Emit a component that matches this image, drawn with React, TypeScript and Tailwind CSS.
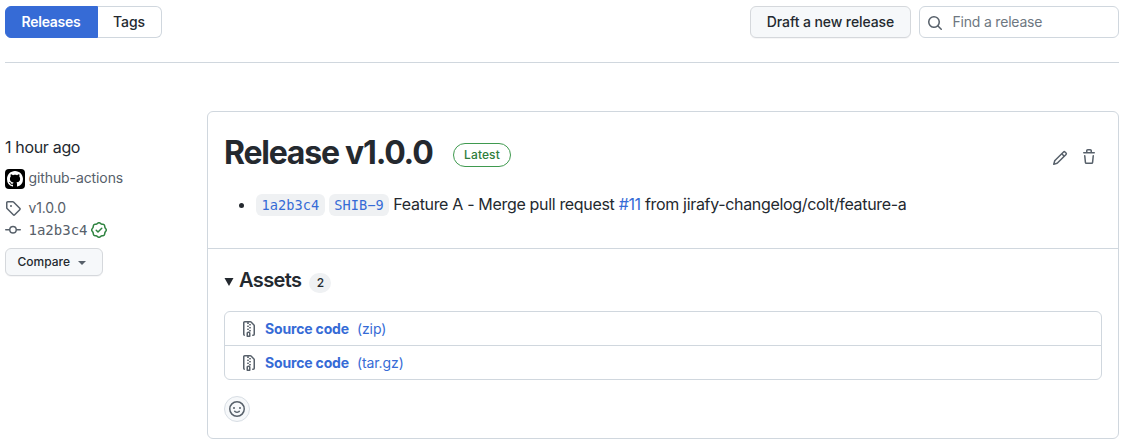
const paths = {
  search:
    'M10.68 11.74a6 6 0 0 1-7.922-8.982 6 6 0 0 1 8.982 7.922l3.04 3.04a.749.749 0 0 1-.326 1.275.749.749 0 0 1-.734-.215ZM11.5 7a4.499 4.499 0 1 0-8.997 0A4.499 4.499 0 0 0 11.5 7Z',
  tag: 'M1 7.775V2.75C1 1.784 1.784 1 2.75 1h5.025c.464 0 .91.184 1.238.513l6.25 6.25a1.75 1.75 0 0 1 0 2.474l-5.026 5.026a1.75 1.75 0 0 1-2.474 0l-6.25-6.25A1.752 1.752 0 0 1 1 7.775Zm1.5 0c0 .066.026.13.073.177l6.25 6.25a.25.25 0 0 0 .354 0l5.025-5.025a.25.25 0 0 0 0-.354l-6.25-6.25a.25.25 0 0 0-.177-.073H2.75a.25.25 0 0 0-.25.25ZM6 5a1 1 0 1 1 0 2 1 1 0 0 1 0-2Z',
  commit:
    'M11.93 8.5a4.002 4.002 0 0 1-7.86 0H.75a.75.75 0 0 1 0-1.5h3.32a4.002 4.002 0 0 1 7.86 0h3.32a.75.75 0 0 1 0 1.5Zm-1.43-.75a2.5 2.5 0 1 0-5 0 2.5 2.5 0 0 0 5 0Z',
  verified:
    'm9.585.52.929.68c.153.112.331.186.518.215l1.138.175a2.678 2.678 0 0 1 2.24 2.24l.174 1.139c.029.187.103.365.215.518l.68.928a2.677 2.677 0 0 1 0 3.17l-.68.928a1.174 1.174 0 0 0-.215.518l-.175 1.138a2.678 2.678 0 0 1-2.241 2.241l-1.138.175a1.17 1.17 0 0 0-.518.215l-.928.68a2.677 2.677 0 0 1-3.17 0l-.928-.68a1.174 1.174 0 0 0-.518-.215L3.83 14.41a2.678 2.678 0 0 1-2.24-2.24l-.175-1.138a1.17 1.17 0 0 0-.215-.518l-.68-.928a2.677 2.677 0 0 1 0-3.17l.68-.928c.112-.153.186-.331.215-.518l.175-1.14a2.678 2.678 0 0 1 2.24-2.24l1.139-.175c.187-.029.365-.103.518-.215l.928-.68a2.677 2.677 0 0 1 3.17 0ZM7.303 1.728l-.927.68a2.67 2.67 0 0 1-1.18.489l-1.137.174a1.179 1.179 0 0 0-.987.987l-.174 1.136a2.677 2.677 0 0 1-.489 1.18l-.68.928a1.18 1.18 0 0 0 0 1.394l.68.927c.256.348.424.753.489 1.18l.174 1.137c.078.509.478.909.987.987l1.136.174a2.67 2.67 0 0 1 1.18.489l.928.68c.414.305.979.305 1.394 0l.927-.68a2.67 2.67 0 0 1 1.18-.489l1.137-.174a1.18 1.18 0 0 0 .987-.987l.174-1.136a2.67 2.67 0 0 1 .489-1.18l.68-.928a1.176 1.176 0 0 0 0-1.394l-.68-.927a2.686 2.686 0 0 1-.489-1.18l-.174-1.137a1.179 1.179 0 0 0-.987-.987l-1.136-.174a2.677 2.677 0 0 1-1.18-.489l-.928-.68a1.176 1.176 0 0 0-1.394 0ZM11.28 6.78l-3.75 3.75a.75.75 0 0 1-1.06 0L4.72 8.78a.751.751 0 0 1 .018-1.042.751.751 0 0 1 1.042-.018L7 8.94l3.22-3.22a.751.751 0 0 1 1.042.018.751.751 0 0 1 .018 1.042Z',
  pencil:
    'M11.013 1.427a1.75 1.75 0 0 1 2.474 0l1.086 1.086a1.75 1.75 0 0 1 0 2.474l-8.61 8.61c-.21.21-.47.364-.756.445l-3.251.93a.75.75 0 0 1-.927-.928l.929-3.25c.081-.286.235-.547.445-.758l8.61-8.61Zm.176 4.823L9.75 4.81l-6.286 6.287a.253.253 0 0 0-.064.108l-.558 1.953 1.953-.558a.253.253 0 0 0 .108-.064Zm1.238-3.763a.25.25 0 0 0-.354 0L10.811 3.75l1.439 1.44 1.263-1.263a.25.25 0 0 0 0-.354Z',
  trash:
    'M11 1.75V3h2.25a.75.75 0 0 1 0 1.5H2.75a.75.75 0 0 1 0-1.5H5V1.75C5 .784 5.784 0 6.75 0h2.5C10.216 0 11 .784 11 1.75ZM4.496 6.675l.66 6.6a.25.25 0 0 0 .249.225h5.19a.25.25 0 0 0 .249-.225l.66-6.6a.75.75 0 0 1 1.492.149l-.66 6.6A1.748 1.748 0 0 1 10.595 15h-5.19a1.75 1.75 0 0 1-1.741-1.575l-.66-6.6a.75.75 0 1 1 1.492-.15ZM6.5 1.75V3h3V1.75a.25.25 0 0 0-.25-.25h-2.5a.25.25 0 0 0-.25.25Z',
  zip: 'M3.5 1.75v11.5c0 .09.048.173.126.217a.75.75 0 0 1-.752 1.298A1.748 1.748 0 0 1 2 13.25V1.75C2 .784 2.784 0 3.75 0h5.586c.464 0 .909.185 1.237.513l2.914 2.914c.329.328.513.773.513 1.237v8.586A1.75 1.75 0 0 1 12.25 15h-.5a.75.75 0 0 1 0-1.5h.5a.25.25 0 0 0 .25-.25V4.664a.25.25 0 0 0-.073-.177L9.513 1.573a.25.25 0 0 0-.177-.073H7.25a.75.75 0 0 1 0 1.5h-.5a.75.75 0 0 1 0-1.5h-3a.25.25 0 0 0-.25.25Zm3.75 8.75h.5c.966 0 1.75.784 1.75 1.75v3a.75.75 0 0 1-.75.75h-2.5a.75.75 0 0 1-.75-.75v-3c0-.966.784-1.75 1.75-1.75ZM6 5.25a.75.75 0 0 1 .75-.75h.5a.75.75 0 0 1 0 1.5h-.5A.75.75 0 0 1 6 5.25Zm.75 2.25h.5a.75.75 0 0 1 0 1.5h-.5a.75.75 0 0 1 0-1.5ZM8 6.75A.75.75 0 0 1 8.75 6h.5a.75.75 0 0 1 0 1.5h-.5A.75.75 0 0 1 8 6.75ZM8.75 3h.5a.75.75 0 0 1 0 1.5h-.5a.75.75 0 0 1 0-1.5ZM8 9.75A.75.75 0 0 1 8.75 9h.5a.75.75 0 0 1 0 1.5h-.5A.75.75 0 0 1 8 9.75Zm-1 2.5v2.25h1v-2.25a.25.25 0 0 0-.25-.25h-.5a.25.25 0 0 0-.25.25Z',
  smiley:
    'M8 0a8 8 0 1 1 0 16A8 8 0 0 1 8 0ZM1.5 8a6.5 6.5 0 1 0 13 0 6.5 6.5 0 0 0-13 0Zm3.82 1.636a.75.75 0 0 1 1.038.175l.007.009c.103.118.22.222.35.31.264.178.683.37 1.285.37.602 0 1.02-.192 1.285-.371.13-.088.247-.192.35-.31l.007-.008a.75.75 0 0 1 1.222.87l-.022-.015c.02.013.021.015.021.015v.001l-.001.002-.002.003-.005.007-.014.019a2.066 2.066 0 0 1-.184.213c-.16.166-.338.316-.53.445-.63.418-1.37.638-2.127.629-.946 0-1.652-.308-2.126-.63a3.331 3.331 0 0 1-.715-.657l-.014-.02-.005-.006-.002-.003v-.002h-.001l.613-.432-.614.43a.75.75 0 0 1 .183-1.044ZM12 7a1 1 0 1 1-2 0 1 1 0 0 1 2 0ZM5 8a1 1 0 1 1 0-2 1 1 0 0 1 0 2Zm5.25 2.25.592.416a97.71 97.71 0 0 0-.592-.416Z',
  github:
    'M8 0c4.42 0 8 3.58 8 8a8.013 8.013 0 0 1-5.45 7.59c-.4.08-.55-.17-.55-.38 0-.27.01-1.13.01-2.2 0-.75-.25-1.23-.54-1.48 1.78-.2 3.65-.88 3.65-3.95 0-.88-.31-1.59-.82-2.15.08-.2.36-1.02-.08-2.12 0 0-.67-.22-2.2.82-.64-.18-1.32-.27-2-.27-.68 0-1.36.09-2 .27-1.53-1.03-2.2-.82-2.2-.82-.44 1.1-.16 1.92-.08 2.12-.51.56-.82 1.28-.82 2.15 0 3.06 1.86 3.75 3.64 3.95-.23.2-.44.55-.51 1.07-.46.21-1.61.55-2.33-.66-.15-.24-.6-.83-1.23-.82-.67.01-.27.38.01.53.34.19.73.9.82 1.13.16.45.68 1.31 2.69.94 0 .67.01 1.3.01 1.49 0 .21-.15.45-.55.38A7.995 7.995 0 0 1 0 8c0-4.42 3.58-8 8-8Z',
};

function Icon({ name, className = 'size-4' }: { name: keyof typeof paths; className?: string }) {
  return (
    <svg viewBox="0 0 16 16" className={`shrink-0 fill-current ${className}`} aria-hidden="true">
      <path d={paths[name]} />
    </svg>
  );
}

function Toolbar() {
  return (
    <header className="flex h-[63px] items-start justify-between border-b border-[#d0d7de] pt-1.5">
      <nav className="flex h-8 text-sm font-medium leading-[30px]">
        <a className="w-[93px] rounded-l-md border border-[#366bd6] bg-[#366bd6] pr-px text-center font-semibold tracking-[-0.25px] text-white">
          Releases
        </a>
        <a className="w-16 rounded-r-md border border-l-0 border-[#d0d7de] pr-px text-center tracking-[-0.1px]">
          Tags
        </a>
      </nav>
      <div className="flex gap-2">
        <button className="h-8 w-[161px] rounded-md border border-[#d5d8dc] bg-[#f6f8fa] text-sm font-medium tracking-[-0.09px] shadow-[0_1px_0_rgba(31,35,40,0.04)]">
          Draft a new release
        </button>
        <label className="flex h-8 w-[200px] items-center rounded-md border border-[#d0d7de] pl-[7px] text-sm text-[#6e7781]">
          <Icon name="search" className="mt-0.5 size-4 text-[#57606a]" />
          <span className="ml-[9.5px] tracking-[-0.2px]">Find a release</span>
        </label>
      </div>
    </header>
  );
}

function Sidebar() {
  return (
    <aside className="w-[202px] shrink-0 pt-6 text-sm text-[#57606a]">
      <div className="text-base leading-6 tracking-[-0.33px] text-[#24292f]">1 hour ago</div>
      <div className="mt-[9px] flex h-5 items-center">
        <span className="mt-px flex size-5 items-center justify-center rounded bg-black text-white">
          <Icon name="github" />
        </span>
        <span className="ml-[3.5px] tracking-[-0.1px]">github-actions</span>
      </div>
      <div className="mt-2.5 flex h-5 items-center">
        <Icon name="tag" />
        <span className="ml-[7.5px] tracking-[-0.15px]">v1.0.0</span>
      </div>
      <div className="mt-[2px] flex h-5 items-center">
        <Icon name="commit" />
        <span className="ml-[7.5px] font-['DejaVu_Sans_Mono',monospace] text-sm">1a2b3c4</span>
        <Icon name="verified" className="ml-[3.5px] size-4 text-[#2f8340]" />
      </div>
      <button className="mt-2 flex h-7 w-[98px] items-center rounded-md border border-[#d5d8dc] bg-[#f6f8fa] pl-[11.5px] text-xs font-medium text-[#24292f] shadow-[0_1px_0_rgba(31,35,40,0.04)]">
        Compare
        <span className="ml-2 mt-0.5 border-x-4 border-t-4 border-x-transparent border-t-[#57606a]" />
      </button>
    </aside>
  );
}

function Code({ children }: { children: string }) {
  return (
    <code className="rounded-md bg-[#eff1f3] px-[5.5px] py-[3px] font-['DejaVu_Sans_Mono',monospace] text-[13.6px] leading-4 tracking-[0.06px] text-[#366bd6]">
      {children}
    </code>
  );
}

function Asset({ format }: { format: string }) {
  return (
    <li className="flex h-[34px] items-center pl-4 text-sm text-[#366bd6] last:h-[33px]">
      <Icon name="zip" className="size-4 text-[#57606a]" />
      <a className="ml-2 font-bold tracking-[-0.16px]">Source code</a>
      <a className="ml-2 tracking-[-0.1px]">({format})</a>
    </li>
  );
}

function ReleaseCard() {
  return (
    <section className="h-[328px] w-[912px] rounded-md border border-[#d0d7de]">
      <div className="h-[137px] border-b border-[#d0d7de] px-4 pt-[17px]">
        <div className="flex h-12 items-center">
          <h1 className="w-[208px] whitespace-nowrap text-[32px] font-bold leading-12 tracking-[-1.22px]">
            Release v1.0.0
          </h1>
          <span className="ml-[21px] mt-1 flex h-6 w-[58px] shrink-0 items-center justify-center rounded-full border border-[#3f9a4f] text-xs font-medium tracking-[0.1px] text-[#2f7d3b]">
            Latest
          </span>
          <div className="ml-auto mt-2 flex gap-[13px] pr-[5px] text-[#57606a]">
            <Icon name="pencil" className="mt-px size-4" />
            <Icon name="trash" />
          </div>
        </div>
        <ul className="mt-[15px] list-disc pl-8 text-base leading-6">
          <li className="tracking-[-0.33px]">
            <span className="inline-flex items-center gap-1 tracking-normal">
              <Code>1a2b3c4</Code>
              <Code>SHIB−9</Code>
            </span>{' '}
            Feature A - Merge pull request <a className="text-[#366bd6]">#11</a> from jirafy-changelog/colt/feature-a
          </li>
        </ul>
      </div>
      <div className="px-4 pt-4">
        <div className="flex h-[30px] items-center">
          <svg viewBox="0 0 10 8" className="mt-1 h-2 w-2.5 fill-[#24292f]" aria-hidden="true">
            <path d="M0.5 0h9L5 8Z" />
          </svg>
          <h2 className="ml-[5px] text-xl font-semibold tracking-[-0.6px]">Assets</h2>
          <span className="ml-2 mt-1.5 flex h-5 w-[22px] items-center justify-center rounded-full bg-[#eff1f3] text-xs font-medium">
            2
          </span>
        </div>
        <ul className="mt-4 divide-y divide-[#d0d7de] rounded-md border border-[#d0d7de]">
          <Asset format="zip" />
          <Asset format="tar.gz" />
        </ul>
        <button className="mt-4 flex size-[26px] items-center justify-center rounded-full border border-[#d8dee4] bg-[#f6f8fa] text-[#57606a]">
          <Icon name="smiley" />
        </button>
      </div>
    </section>
  );
}

export default function App() {
  return (
    <div className="h-[445px] overflow-hidden bg-white pl-[5px] pr-1 font-[Inter,sans-serif] text-[#24292f]">
      <Toolbar />
      <main className="flex pt-12">
        <Sidebar />
        <ReleaseCard />
      </main>
    </div>
  );
}
